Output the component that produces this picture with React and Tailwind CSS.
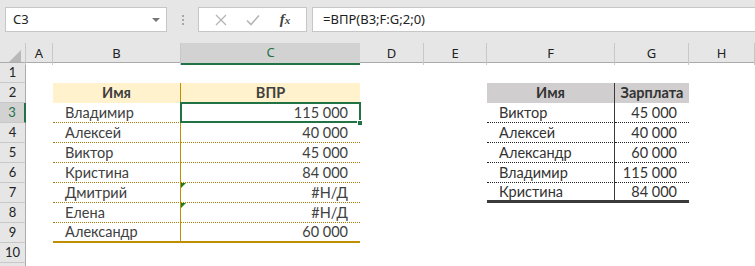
const COLS = "grid-cols-[26px_27px_128px_179px_64px_63px_128px_74px_1fr]";

const left = [
  ["Владимир", "115 000"],
  ["Алексей", "40 000"],
  ["Виктор", "45 000"],
  ["Кристина", "84 000"],
  ["Дмитрий", "#Н/Д"],
  ["Елена", "#Н/Д"],
  ["Александр", "60 000"],
];

const right = [
  ["Виктор", "45 000"],
  ["Алексей", "40 000"],
  ["Александр", "60 000"],
  ["Владимир", "115 000"],
  ["Кристина", "84 000"],
];

function RowHead({ n }) {
  const sel = n === 3;
  return (
    <div
      className={`flex items-center justify-center border-b border-[#c8c8c8] text-[13px] ${
        sel
          ? "bg-[#d2d2d2] text-[#217346] border-r-2 border-r-[#217346]"
          : "bg-[#e6e6e6] text-[#222] border-r border-r-[#ababab]"
      }`}
    >
      {n < 11 ? n : ""}
    </div>
  );
}

function LeftCells({ r }) {
  if (r === 2) {
    return (
      <>
        <div className="bg-[#fff2cc] border-r border-[#bf8f00] flex items-center justify-center font-bold text-[#404040]">Имя</div>
        <div className="bg-[#fff2cc] flex items-center justify-center font-bold text-[#404040]">ВПР</div>
      </>
    );
  }
  if (r >= 3 && r <= 9) {
    const [name, val] = left[r - 3];
    const last = r === 9;
    const bottom = last ? "border-b-2 border-b-[#bf8f00]" : "border-b border-dotted border-b-[#a87c00]";
    return (
      <>
        <div className={`flex items-center pl-3 text-[#404040] ${bottom} border-r border-r-[#bf8f00] [border-right-style:solid]`}>{name}</div>
        <div className={`relative flex items-center justify-end pr-3 text-[#404040] ${bottom}`}>
          {(r === 7 || r === 8) && (
            <span className="absolute left-0 top-0 w-0 h-0 border-t-[5px] border-t-[#1e7e1e] border-r-[5px] border-r-transparent" />
          )}
          {r === 3 && (
            <>
              <span className="absolute -left-px -top-px -right-px -bottom-px border-2 border-[#217346]" />
              <span className="absolute -right-[3px] -bottom-[4px] w-[6px] h-[6px] bg-[#217346] border border-white" />
            </>
          )}
          <span className="relative">{val}</span>
        </div>
      </>
    );
  }
  return (
    <>
      <div />
      <div />
    </>
  );
}

function RightCells({ r }) {
  if (r === 2) {
    return (
      <>
        <div className="bg-[#d0cece] border-r border-[#3a3a3a] flex items-center justify-center font-bold text-[#333]">Имя</div>
        <div className="bg-[#d0cece] flex items-center justify-center font-bold text-[#333]">Зарплата</div>
      </>
    );
  }
  if (r >= 3 && r <= 7) {
    const [name, val] = right[r - 3];
    const last = r === 7;
    const bottom = last ? "border-b-[3px] border-b-[#3a3a3a]" : "border-b border-dotted border-b-[#222]";
    return (
      <>
        <div className={`flex items-center pl-3 text-[#333] ${bottom} border-r border-r-[#3a3a3a] [border-right-style:solid]`}>{name}</div>
        <div className={`flex items-center justify-end pr-3 text-[#333] ${bottom}`}>{val}</div>
      </>
    );
  }
  return (
    <>
      <div />
      <div />
    </>
  );
}

export default function App() {
  const rows = [1, 2, 3, 4, 5, 6, 7, 8, 9, 10, 11];
  return (
    <div className="w-[755px] h-[266px] overflow-hidden bg-white font-['Lato','Liberation_Sans',sans-serif]">
      {/* Formula bar */}
      <div className="h-[43px] bg-[#e6e6e6] flex items-start pt-[7px] pl-[5px] font-['Noto_Sans','Open_Sans',sans-serif]">
        <div className="w-[162px] h-[25px] bg-white border border-[#c6c6c6] flex items-center justify-between pl-[7px] pr-[6px] text-[13px] text-[#222]">
          <span>C3</span>
          <span className="w-0 h-0 border-l-[4px] border-r-[4px] border-t-[4px] border-l-transparent border-r-transparent border-t-[#777]" />
        </div>
        <div className="w-[31px] h-[25px] flex flex-col items-center justify-center gap-[2px]">
          <span className="w-[2px] h-[2px] bg-[#a8a8a8]" />
          <span className="w-[2px] h-[2px] bg-[#a8a8a8]" />
          <span className="w-[2px] h-[2px] bg-[#a8a8a8]" />
        </div>
        <div className="w-[109px] h-[25px] bg-white border border-[#c6c6c6] flex items-center justify-around px-[6px]">
          <svg width="12" height="12" viewBox="0 0 12 12" className="stroke-[#b4b4b4]">
            <path d="M1 1L11 11M11 1L1 11" strokeWidth="1.3" fill="none" />
          </svg>
          <svg width="14" height="12" viewBox="0 0 14 12" className="stroke-[#b4b4b4]">
            <path d="M1 6.5L5 10.5L13 1.5" strokeWidth="1.6" fill="none" />
          </svg>
          <span className="font-['Liberation_Serif',serif] italic font-bold text-[15px] text-[#444] leading-none">
            f<span className="text-[11px]">x</span>
          </span>
        </div>
        <div className="ml-[5px] flex-1 h-[25px] bg-white border border-[#c6c6c6] border-r-0 flex items-center pl-[10px] text-[13px] text-[#222]">
          =ВПР(B3;F:G;2;0)
        </div>
      </div>

      {/* Column headers */}
      <div className={`grid ${COLS} h-[20px] bg-[#e6e6e6] border-b border-[#ababab] font-['Noto_Sans','Open_Sans',sans-serif] text-[13px] text-[#222]`}>
        <div className="relative border-r border-[#c8c8c8]">
          <span className="absolute right-[4px] bottom-[3px] w-0 h-0 border-l-[12px] border-l-transparent border-b-[12px] border-b-[#b8b8b8]" />
        </div>
        {["A", "B", "C", "D", "E", "F", "G", "H"].map((c) => (
          <div
            key={c}
            className={`flex items-center justify-center ${
              c === "C"
                ? "bg-[#d2d2d2] text-[#217346] border-b-2 border-[#217346]"
                : "border-r border-[#c8c8c8]"
            }`}
          >
            {c}
          </div>
        ))}
      </div>

      {/* Body */}
      <div className={`grid ${COLS} auto-rows-[20px] text-[14.5px]`}>
        {rows.map((r) => (
          <div key={r} className="contents">
            <RowHead n={r} />
            <div />
            <LeftCells r={r} />
            <div />
            <div />
            <RightCells r={r} />
            <div />
          </div>
        ))}
      </div>
    </div>
  );
}
